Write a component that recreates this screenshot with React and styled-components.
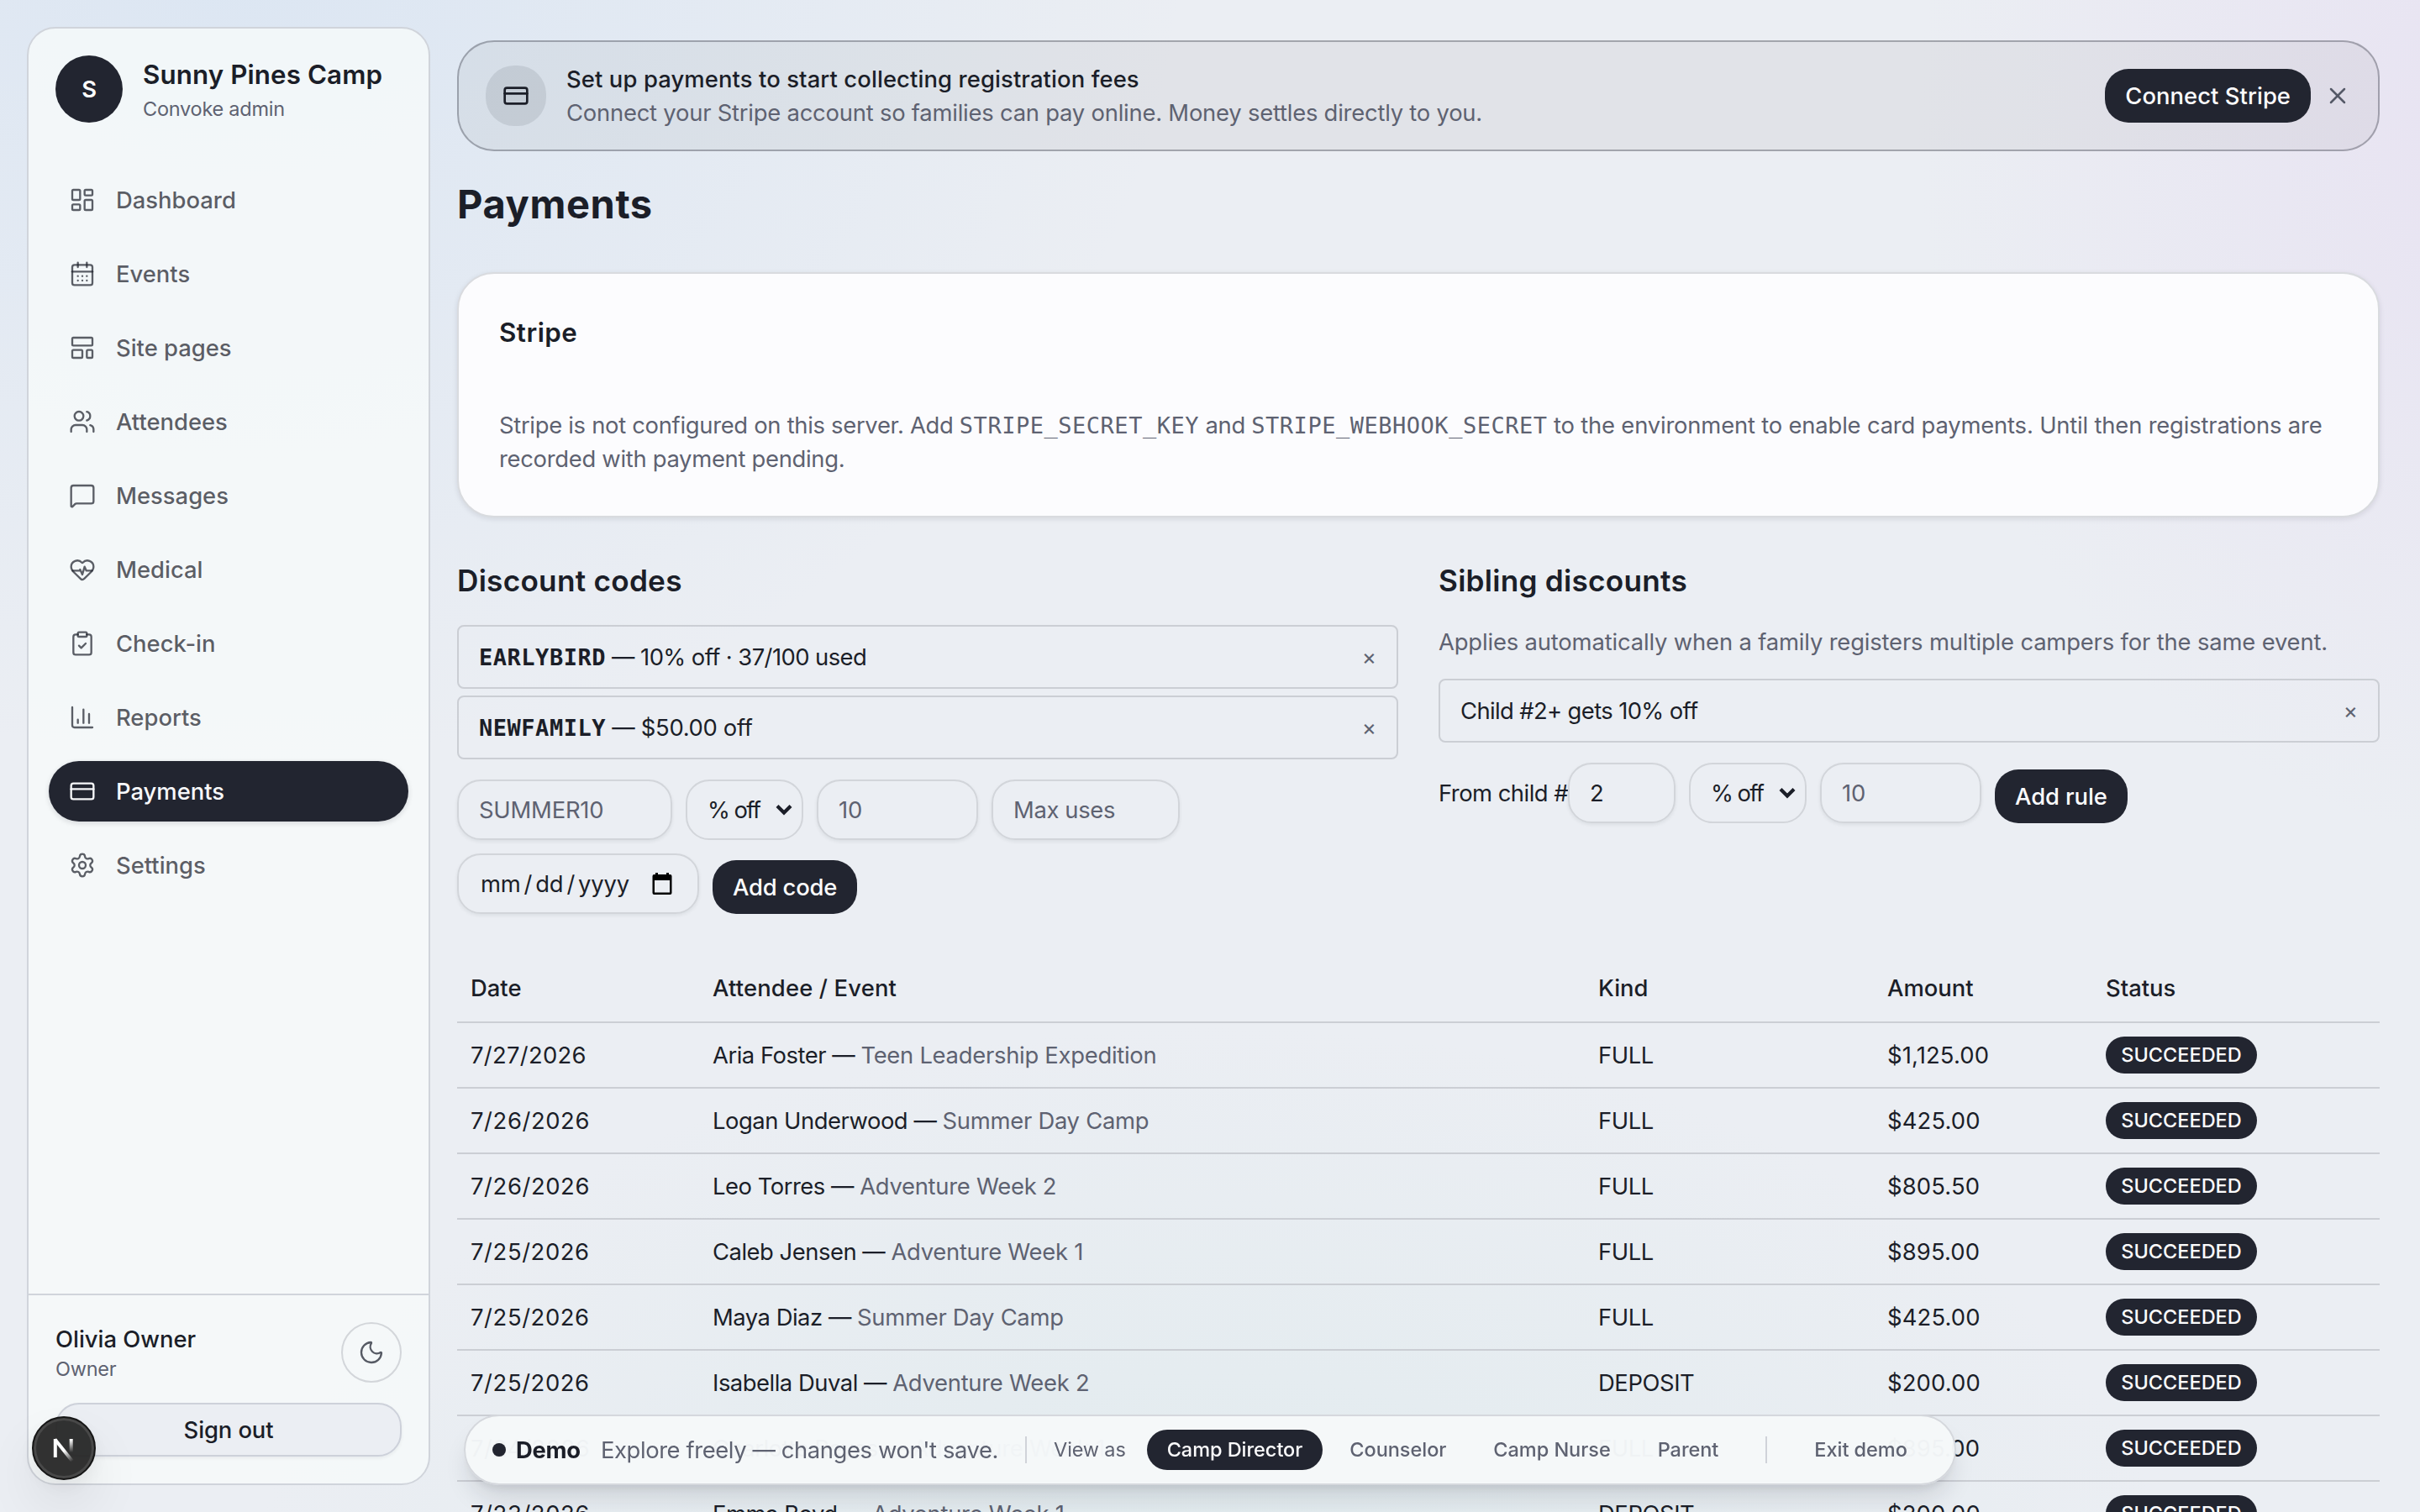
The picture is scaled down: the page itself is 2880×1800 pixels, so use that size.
import React from 'react'
import styled, { createGlobalStyle, css } from 'styled-components'
import {
  LayoutDashboard,
  CalendarDays,
  LayoutTemplate,
  Users,
  MessageSquare,
  HeartPulse,
  ClipboardCheck,
  ChartColumn,
  CreditCard,
  Settings,
  Moon,
  X,
} from 'lucide-react'

const ink = '#1b1e28'
const dark = '#222530'
const muted = '#5e6271'
const line = '#cbced4'

const GlobalStyle = createGlobalStyle`
   * {
      box-sizing: border-box;
      margin: 0;
      padding: 0;
   }
   body {
      font-family: Inter, sans-serif;
      font-size: 27.4px;
      line-height: 40px;
      letter-spacing: -0.25px;
      color: ${ink};
      overflow: hidden;
   }
   button {
      font: inherit;
      color: inherit;
      border: none;
      background: none;
   }
`

const Page = styled.div`
   display: flex;
   gap: 32px;
   width: 2880px;
   height: 1800px;
   padding: 32px 48px 32px 32px;
   overflow: hidden;
   background:
      radial-gradient(1120px 1000px at 290px -90px, rgba(199, 219, 242, 0.44), rgba(199, 219, 242, 0) 100%),
      radial-gradient(740px 860px at 3020px 150px, rgba(226, 208, 240, 0.4), rgba(226, 208, 240, 0) 100%),
      radial-gradient(1160px 740px at 1440px 1960px, rgba(205, 228, 228, 0.36), rgba(205, 228, 228, 0) 100%),
      #ebeef3;
`

const Sidebar = styled.aside`
   display: flex;
   flex-direction: column;
   flex-shrink: 0;
   width: 480px;
   height: 1736px;
   border: 2px solid #d0d4db;
   border-radius: 34px;
   background-color: rgba(246, 250, 250, 0.82);
`

const Brand = styled.div`
   display: flex;
   align-items: center;
   gap: 24px;
   height: 144px;
   padding: 0 32px;
`

const Avatar = styled.div`
   display: flex;
   align-items: center;
   justify-content: center;
   width: 80px;
   height: 80px;
   border-radius: 50%;
   background-color: ${dark};
   color: #fff;
   font-weight: 600;
`

const BrandText = styled.div`
   padding-top: 4px;
`

const BrandName = styled.div`
   font-size: 31.3px;
   font-weight: 600;
   line-height: 44px;
   letter-spacing: 0.1px;
`

const Small = styled.div`
   font-size: 23.5px;
   line-height: ${props => props.$height || 32}px;
   color: ${muted};
`

const Nav = styled.nav`
   display: flex;
   flex-direction: column;
   flex: 1;
   gap: 16px;
   padding: 24px;
`

const NavItem = styled.a`
   display: flex;
   align-items: center;
   gap: 24px;
   height: 72px;
   padding-left: 24px;
   border-radius: 36px;
   font-weight: 500;
   letter-spacing: 0;
   color: rgba(31, 34, 44, 0.72);
   ${props => props.$active && css`
      color: #f7f8fa;
      background-color: ${dark};
      box-shadow: 0 2px 6px rgba(20, 24, 35, 0.14);
   `}
`

const Account = styled.div`
   display: flex;
   flex-direction: column;
   gap: 24px;
   padding: 32px;
   border-top: 2px solid #d0d4db;
`

const AccountRow = styled.div`
   display: flex;
   justify-content: space-between;
   align-items: center;
`

const Strong = styled.div`
   font-weight: 500;
   letter-spacing: ${props => props.$track || 0}px;
`

const RoundButton = styled.button`
   display: flex;
   align-items: center;
   justify-content: center;
   width: 72px;
   height: 72px;
   border: 2px solid #d3d6da;
   border-radius: 50%;
   color: #565a64;
`

const SignOut = styled.button`
   height: 64px;
   border: 2px solid #cdd1da;
   border-radius: 28px;
   background-color: #ebeef3;
   font-weight: 500;
   letter-spacing: -0.1px;
   box-shadow: 0 2px 4px rgba(20, 24, 35, 0.06);
`

const Main = styled.main`
   flex: 1;
   padding-top: 16px;
`

const Banner = styled.section`
   display: flex;
   align-items: center;
   height: 132px;
   padding: 0 32px;
   border: 2px solid rgba(33, 36, 48, 0.36);
   border-radius: 44px;
   background-color: rgba(33, 36, 48, 0.05);
   background-clip: padding-box;
`

const BannerIcon = styled.div`
   display: flex;
   align-items: center;
   justify-content: center;
   width: 72px;
   height: 72px;
   margin-right: 24px;
   border-radius: 34px;
   background-color: rgba(33, 36, 48, 0.1);
`

const BannerText = styled.div`
   flex: 1;
`

const Muted = styled.p`
   color: ${muted};
   letter-spacing: ${props => props.$track || -0.25}px;
`

const Button = styled.button`
   height: 64px;
   padding: 0 24px;
   border-radius: 28px;
   background-color: ${dark};
   color: #fbfbfc;
   font-weight: 500;
   white-space: nowrap;
   letter-spacing: ${props => props.$track || 0}px;
`

const Dismiss = styled.button`
   display: flex;
   margin-left: 16px;
   color: #555967;
`

const Title = styled.h1`
   margin: 27px 0 45px;
   font-size: 47px;
   line-height: 72px;
   letter-spacing: 0.6px;
`

const Card = styled.section`
   height: 292px;
   padding: 48px;
   border: 2px solid #d9dbdf;
   border-radius: 44px;
   background-color: #fcfcfe;
   box-shadow: 0 2px 6px rgba(20, 24, 35, 0.1);
`

const CardTitle = styled.h2`
   margin-bottom: 68px;
   font-size: 31.3px;
   font-weight: 600;
   line-height: 44px;
   letter-spacing: 0.5px;
`

const Tail = styled.span`
   letter-spacing: -0.18px;
`

const Code = styled.code`
   font-family: 'DejaVu Sans Mono', monospace;
   font-size: 27px;
   line-height: 1;
   letter-spacing: 0.52px;
   font-weight: ${props => (props.$bold ? 700 : 400)};
`

const Columns = styled.div`
   display: grid;
   grid-template-columns: 1fr 1fr;
   gap: 48px;
   margin: 48px 0;
`

const Column = styled.section`
   display: flex;
   flex-direction: column;
   gap: 24px;
`

const Heading = styled.h2`
   height: 56px;
   font-size: 35.2px;
   font-weight: 600;
   line-height: 54px;
   letter-spacing: 0.25px;
`

const List = styled.ul`
   display: flex;
   flex-direction: column;
   gap: 8px;
   list-style: none;
`

const ListItem = styled.li`
   display: flex;
   justify-content: space-between;
   align-items: center;
   height: 76px;
   padding: 0 24px;
   border: 2px solid ${line};
   border-radius: 8px;
   letter-spacing: ${props => props.$track}px;
`

const Remove = styled.button`
   font-size: 26px;
   color: ${muted};
`

const Form = styled.form`
   display: flex;
   flex-wrap: wrap;
   align-items: flex-end;
   gap: 16px;
`

const Label = styled.label`
   display: flex;
   align-items: center;
   letter-spacing: -0.52px;
`

const Field = styled.div`
   display: flex;
   align-items: center;
   justify-content: space-between;
   width: ${props => props.$width}px;
   height: 72px;
   padding: 0 ${props => props.$right || 24}px 0 24px;
   border: 2px solid #d2d5da;
   border-radius: 28px;
   color: ${props => (props.$filled ? ink : muted)};
   letter-spacing: ${props => props.$track || -0.2}px;
   box-shadow: ${props => (props.$flat ? 'none' : '0 2px 4px rgba(20, 24, 35, 0.07)')};
`

const DateText = styled.span`
   display: flex;
   gap: 4px;
   padding-left: 2px;
`

const Table = styled.div`
   display: flex;
   flex-direction: column;
`

const Row = styled.div`
   display: grid;
   grid-template-columns: 288px 1054px 344px 260px 1fr;
   align-items: center;
   height: ${props => (props.$head ? 82 : 78)}px;
   flex-shrink: 0;
   border-bottom: 2px solid ${line};
   font-weight: ${props => (props.$head ? 500 : 400)};
`

const Cell = styled.div`
   padding-left: 16px;
   letter-spacing: ${props => props.$track || 0}px;
   white-space: nowrap;
`

const EventName = styled.span`
   color: ${muted};
   letter-spacing: -0.27px;
`

const Badge = styled.div`
   display: flex;
   align-items: center;
   justify-content: center;
   width: 180px;
   height: 44px;
   border-radius: 24px;
   background-color: ${dark};
   color: #fbfbfc;
   font-size: 23.5px;
   font-weight: 500;
   letter-spacing: 0;
`

const DemoBar = styled.div`
   position: fixed;
   left: 552px;
   bottom: 32px;
   display: flex;
   align-items: center;
   width: 1776px;
   height: 84px;
   padding: 0 32px;
   border: 2px solid #d5d8dd;
   border-radius: 42px;
   background-color: rgba(245, 248, 249, 0.975);
   white-space: nowrap;
   box-shadow: 0 20px 30px -6px rgba(20, 24, 35, 0.13), 0 8px 12px -6px rgba(20, 24, 35, 0.1);
`

const Dot = styled.span`
   width: 16px;
   height: 16px;
   margin-right: 12px;
   border-radius: 50%;
   background-color: ${dark};
`

const DemoName = styled.strong`
   margin-right: 24px;
   font-weight: 700;
`

const Divider = styled.span`
   width: 2px;
   height: 32px;
   margin: 0 32px;
   background-color: #d0d3d9;
`

const ViewAs = styled.span`
   margin-right: 25px;
   font-size: 23.5px;
   letter-spacing: -0.15px;
   color: ${muted};
`

const Roles = styled.div`
   display: flex;
   gap: 8px;
`

const Role = styled.button`
   height: 48px;
   padding: 0 24px;
   border-radius: 24px;
   font-size: 23.5px;
   font-weight: 500;
   letter-spacing: -0.04px;
   color: ${props => (props.$active ? '#fbfbfc' : muted)};
   background-color: ${props => (props.$active ? dark : 'transparent')};
`

const DevBadge = styled.div`
   position: fixed;
   left: 38px;
   bottom: 38px;
   width: 76px;
   height: 76px;
   border: 2px solid #161616;
   border-radius: 50%;
   background-color: rgba(38, 38, 38, 0.95);
   box-shadow: inset 0 0 0 3px #484848, 0 32px 64px rgba(0, 0, 0, 0.08), 0 8px 24px rgba(0, 0, 0, 0.06);
`

const nav = [
  ['Dashboard', LayoutDashboard],
  ['Events', CalendarDays],
  ['Site pages', LayoutTemplate],
  ['Attendees', Users],
  ['Messages', MessageSquare],
  ['Medical', HeartPulse],
  ['Check-in', ClipboardCheck],
  ['Reports', ChartColumn],
  ['Payments', CreditCard],
  ['Settings', Settings],
]

const payments = [
  ['7/27/2026', 'Aria Foster', 'Teen Leadership Expedition', 'FULL', '$1,125.00'],
  ['7/26/2026', 'Logan Underwood', 'Summer Day Camp', 'FULL', '$425.00'],
  ['7/26/2026', 'Leo Torres', 'Adventure Week 2', 'FULL', '$805.50'],
  ['7/25/2026', 'Caleb Jensen', 'Adventure Week 1', 'FULL', '$895.00'],
  ['7/25/2026', 'Maya Diaz', 'Summer Day Camp', 'FULL', '$425.00'],
  ['7/25/2026', 'Isabella Duval', 'Adventure Week 2', 'DEPOSIT', '$200.00'],
  ['7/24/2026', 'Charlotte Reyes', 'Adventure Week 1', 'FULL', '$895.00'],
  ['7/23/2026', 'Emma Boyd', 'Adventure Week 1', 'DEPOSIT', '$200.00'],
]

const Chevron = () => (
  <svg width="20" height="14" viewBox="0 0 20 14" fill="none" stroke={ink} strokeWidth="4.2">
    <path d="M2 2.5l8 8 8-8" />
  </svg>
)

const DateIcon = () => (
  <svg width="24" height="26" viewBox="0 0 24 26">
    <path fill="#000" fillRule="evenodd" d="M4 0h3v2h10V0h3v2h1.500a2 2 0 0 1 2 2v20a2 2 0 0 1-2 2h-19a2 2 0 0 1-2-2V4a2 2 0 0 1 2-2H4zM3 9v14.500h18V9z" />
  </svg>
)

const NextMark = () => (
  <svg width="72" height="72" viewBox="0 0 72 72" fill="none" strokeWidth="4">
    <defs>
      <linearGradient id="slant" gradientUnits="userSpaceOnUse" x1="38" y1="38" x2="47" y2="51">
        <stop stopColor="#fff" />
        <stop offset="1" stopColor="#fff" stopOpacity="0" />
      </linearGradient>
      <linearGradient id="stem" gradientUnits="userSpaceOnUse" x1="44" y1="26" x2="44" y2="41">
        <stop stopColor="#fff" />
        <stop offset="1" stopColor="#fff" stopOpacity="0" />
      </linearGradient>
    </defs>
    <path d="M25.800 47V25" stroke="#fff" />
    <path d="M25.400 25.500L46.500 52" stroke="url(#slant)" />
    <path d="M44.700 25v16" stroke="url(#stem)" />
  </svg>
)

const SelectField = () => (
  <Field $width={140} $right={11} $filled $flat $track={-1.6}>
    % off
    <Chevron />
  </Field>
)

const PaymentRow = ({ payment }) => {
  const [date, name, event, kind, amount] = payment

  return (
    <Row>
      <Cell $track={date === '7/27/2026' ? 0.3 : 0.6}>{date}</Cell>
      <Cell $track={-0.48}>{name} — <EventName>{event}</EventName></Cell>
      <Cell $track={-0.42}>{kind}</Cell>
      <Cell $track={0.15}>{amount}</Cell>
      <Cell><Badge>SUCCEEDED</Badge></Cell>
    </Row>
  )
}

const App = () => (
  <>
    <GlobalStyle />
    <Page>
      <Sidebar>
        <Brand>
          <Avatar>S</Avatar>
          <BrandText>
            <BrandName>Sunny Pines Camp</BrandName>
            <Small $height={38}>Convoke admin</Small>
          </BrandText>
        </Brand>
        <Nav>
          {nav.map(([label, Icon]) => (
            <NavItem key={label} $active={label === 'Payments'}>
              <Icon size={32} strokeWidth={1.75} />
              {label}
            </NavItem>
          ))}
        </Nav>
        <Account>
          <AccountRow>
            <div>
              <Strong>Olivia Owner</Strong>
              <Small>Owner</Small>
            </div>
            <RoundButton><Moon size={32} strokeWidth={1.75} /></RoundButton>
          </AccountRow>
          <SignOut>Sign out</SignOut>
        </Account>
      </Sidebar>
      <Main>
        <Banner>
          <BannerIcon><CreditCard size={32} strokeWidth={2} /></BannerIcon>
          <BannerText>
            <Strong $track={0.11}>Set up payments to start collecting registration fees</Strong>
            <Muted $track={-0.22}>Connect your Stripe account so families can pay online. Money settles directly to you.</Muted>
          </BannerText>
          <Button $track={0.05}>Connect Stripe</Button>
          <Dismiss><X size={32} strokeWidth={1.9} /></Dismiss>
        </Banner>
        <Title>Payments</Title>
        <Card>
          <CardTitle>Stripe</CardTitle>
          <Muted $track={-0.3}>
            Stripe is not configured on this server. Add <Code>STRIPE_SECRET_KEY</Code> and <Code>STRIPE_WEBHOOK_SECRET</Code>{' '}
            <Tail>to the environment to enable card payments. Until then registrations are</Tail> recorded with payment pending.
          </Muted>
        </Card>
        <Columns>
          <Column>
            <Heading>Discount codes</Heading>
            <List>
              <ListItem $track={-0.57}>
                <span><Code $bold>EARLYBIRD</Code> — 10% off · 37/100 used</span>
                <Remove>×</Remove>
              </ListItem>
              <ListItem $track={-0.32}>
                <span><Code $bold>NEWFAMILY</Code> — $50.00 off</span>
                <Remove>×</Remove>
              </ListItem>
            </List>
            <Form>
              <Field $width={256}>SUMMER10</Field>
              <SelectField />
              <Field $width={192}>10</Field>
              <Field $width={224} $track={-0.36}>Max uses</Field>
              <Field $width={288} $right={30} $filled>
                <DateText><span>mm</span>/<span>dd</span>/<span>yyyy</span></DateText>
                <DateIcon />
              </Field>
              <Button type="button" $track={-0.2}>Add code</Button>
            </Form>
          </Column>
          <Column>
            <Heading>Sibling discounts</Heading>
            <Muted $track={-0.16}>Applies automatically when a family registers multiple campers for the same event.</Muted>
            <List>
              <ListItem $track={-0.62}>
                <span>Child #2+ gets 10% off</span>
                <Remove>×</Remove>
              </ListItem>
            </List>
            <Form>
              <Label>
                From child #
                <Field $width={128} $filled>2</Field>
              </Label>
              <SelectField />
              <Field $width={192}>10</Field>
              <Button type="button" $track={-0.1}>Add rule</Button>
            </Form>
          </Column>
        </Columns>
        <Table>
          <Row $head>
            <Cell>Date</Cell>
            <Cell $track={0.16}>Attendee / Event</Cell>
            <Cell>Kind</Cell>
            <Cell>Amount</Cell>
            <Cell>Status</Cell>
          </Row>
          {payments.map(payment => (
            <PaymentRow key={payment[1]} payment={payment} />
          ))}
        </Table>
      </Main>
    </Page>
    <DemoBar>
      <Dot />
      <DemoName>Demo</DemoName>
      <Muted as="span" $track={-0.4}>Explore freely — changes won't save.</Muted>
      <Divider />
      <ViewAs>View as</ViewAs>
      <Roles>
        <Role $active>Camp Director</Role>
        <Role>Counselor</Role>
        <Role>Camp Nurse</Role>
        <Role>Parent</Role>
      </Roles>
      <Divider />
      <Role>Exit demo</Role>
    </DemoBar>
    <DevBadge><NextMark /></DevBadge>
  </>
)

export default App
